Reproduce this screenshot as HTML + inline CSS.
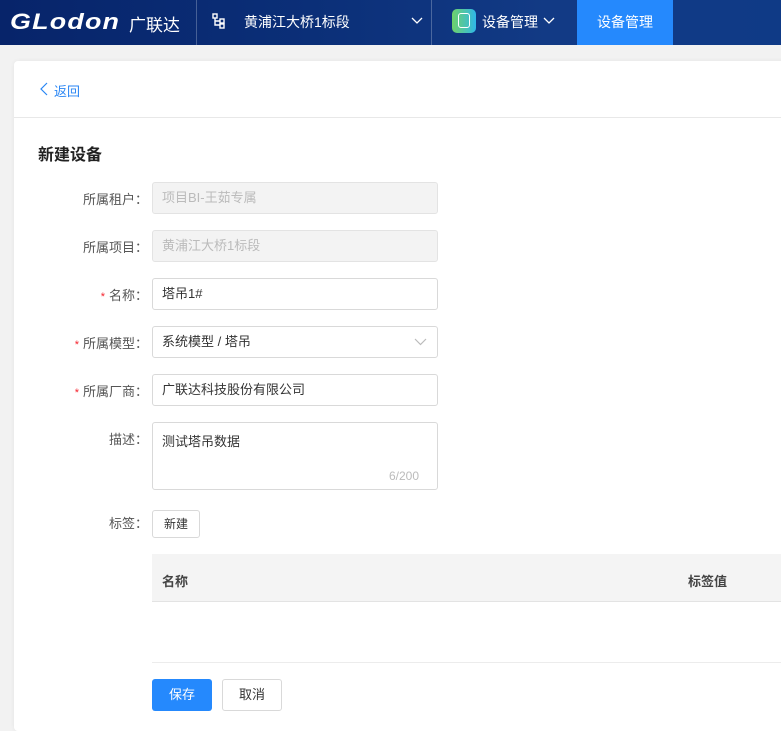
<!DOCTYPE html>
<html><head><meta charset="utf-8"><style>
*{box-sizing:border-box;margin:0;padding:0}
body{width:781px;height:717px;overflow:hidden;background:#f2f2f2;font-family:"Liberation Sans","Noto Sans CJK SC",sans-serif;font-size:13px;color:#333;position:relative}
.hd{position:absolute;left:0;top:0;width:781px;height:45px;background:linear-gradient(90deg,#07246a 0%,#0b2f78 40%,#123a85 70%,#0f3a86 100%)}
.ab{position:absolute}
.lbl{position:absolute;right:633px;width:140px;text-align:right;color:#555;font-size:13px}
.req{color:#f5222d;margin-right:4px;font-size:11px}
.in{position:absolute;left:152px;width:286px;height:32px;border:1px solid #d9d9d9;border-radius:3px;padding:0 9px;line-height:30px;font-size:13px;color:#333;background:#fff}
.dis{background:#f3f3f3;color:#bbb;border-color:#e3e3e3}
</style></head><body>
<div class="hd">
 <div class="ab" style="left:10px;top:9px;color:#fff;font-size:22px;font-weight:bold;font-style:italic;letter-spacing:1px;transform:scaleX(1.22);transform-origin:left">GLodon</div>
 <div class="ab" style="left:129px;top:11px;color:#fff;font-size:17px">广联达</div>
 <div class="ab" style="left:196px;top:0;width:1px;height:45px;background:rgba(255,255,255,.25)"></div>
 <svg class="ab" style="left:212px;top:13px" width="14" height="16" viewBox="0 0 14 16" fill="none" stroke="#fff" stroke-width="1.4"><rect x="1" y="1" width="4" height="4"/><path d="M3 5v7h5M3 8h5"/><rect x="8" y="6" width="4" height="4"/><rect x="8" y="11" width="4" height="4"/></svg>
 <div class="ab" style="left:244px;top:12px;color:#fff;font-size:14px">黄浦江大桥1标段</div>
 <svg class="ab" style="left:411px;top:17px" width="12" height="8" viewBox="0 0 12 8"><path d="M1 1l5 5 5-5" stroke="#fff" fill="none" stroke-width="1.3"/></svg>
 <div class="ab" style="left:431px;top:0;width:1px;height:45px;background:rgba(255,255,255,.25)"></div>
 <div class="ab" style="left:452px;top:9px;width:24px;height:24px;border-radius:5px;background:linear-gradient(90deg,#6fd26a,#2fb7e8)"><div style="position:absolute;left:6px;top:4px;width:12px;height:15px;border:1.5px solid #fff;border-radius:3px"></div></div>
 <div class="ab" style="left:482px;top:12px;color:#fff;font-size:14px">设备管理</div>
 <svg class="ab" style="left:543px;top:17px" width="12" height="8" viewBox="0 0 12 8"><path d="M1 1l5 5 5-5" stroke="#fff" fill="none" stroke-width="1.3"/></svg>
 <div class="ab" style="left:577px;top:0;width:96px;height:45px;background:#2589fd;color:#fff;font-size:14px;text-align:center;line-height:44px">设备管理</div>
</div>
<div class="ab" style="left:14px;top:61px;width:780px;height:670px;background:#fff;border-radius:4px;box-shadow:0 0 4px rgba(0,0,0,.06)"></div>
<svg class="ab" style="left:40px;top:82px" width="8" height="14" viewBox="0 0 8 14"><path d="M7 1L1 7l6 6" stroke="#2a86f4" fill="none" stroke-width="1.2"/></svg>
<div class="ab" style="left:54px;top:81px;color:#2a86f4;font-size:13px">返回</div>
<div class="ab" style="left:14px;top:117px;width:767px;height:1px;background:#e8e8e8"></div>
<div class="ab" style="left:38px;top:141px;font-size:16px;font-weight:bold;color:#222">新建设备</div>

<div class="lbl" style="top:189px">所属租户：</div><div class="in dis" style="top:182px">项目BI-王茹专属</div>
<div class="lbl" style="top:237px">所属项目：</div><div class="in dis" style="top:230px">黄浦江大桥1标段</div>
<div class="lbl" style="top:285px"><span class="req">*</span>名称：</div><div class="in" style="top:278px">塔吊1#</div>
<div class="lbl" style="top:333px"><span class="req">*</span>所属模型：</div><div class="in" style="top:326px">系统模型 / 塔吊<svg style="position:absolute;right:10px;top:11px" width="13" height="8" viewBox="0 0 13 8"><path d="M1 1l5.5 5.5L12 1" stroke="#bbb" fill="none" stroke-width="1.2"/></svg></div>
<div class="lbl" style="top:381px"><span class="req">*</span>所属厂商：</div><div class="in" style="top:374px">广联达科技股份有限公司</div>
<div class="lbl" style="top:429px">描述：</div><div class="in" style="top:422px;height:68px;line-height:20px;padding-top:9px">测试塔吊数据<span style="position:absolute;right:18px;bottom:3px;color:#bbb;font-size:12px">6/200</span></div>
<div class="lbl" style="top:513px">标签：</div>
<div class="ab" style="left:152px;top:510px;width:48px;height:28px;border:1px solid #d9d9d9;border-radius:3px;text-align:center;line-height:26px;font-size:12px;color:#333">新建</div>
<div class="ab" style="left:152px;top:554px;width:629px;height:48px;background:#f4f4f4;border-bottom:1px solid #e3e3e3"></div>
<div class="ab" style="left:162px;top:571px;font-weight:bold;color:#444">名称</div>
<div class="ab" style="left:688px;top:571px;font-weight:bold;color:#444">标签值</div>
<div class="ab" style="left:152px;top:662px;width:629px;height:1px;background:#ececec"></div>
<div class="ab" style="left:152px;top:679px;width:60px;height:32px;background:#2589fd;border-radius:3px;color:#fff;text-align:center;line-height:32px">保存</div>
<div class="ab" style="left:222px;top:679px;width:60px;height:32px;border:1px solid #d9d9d9;border-radius:3px;text-align:center;line-height:30px;color:#333">取消</div>
</body></html>
